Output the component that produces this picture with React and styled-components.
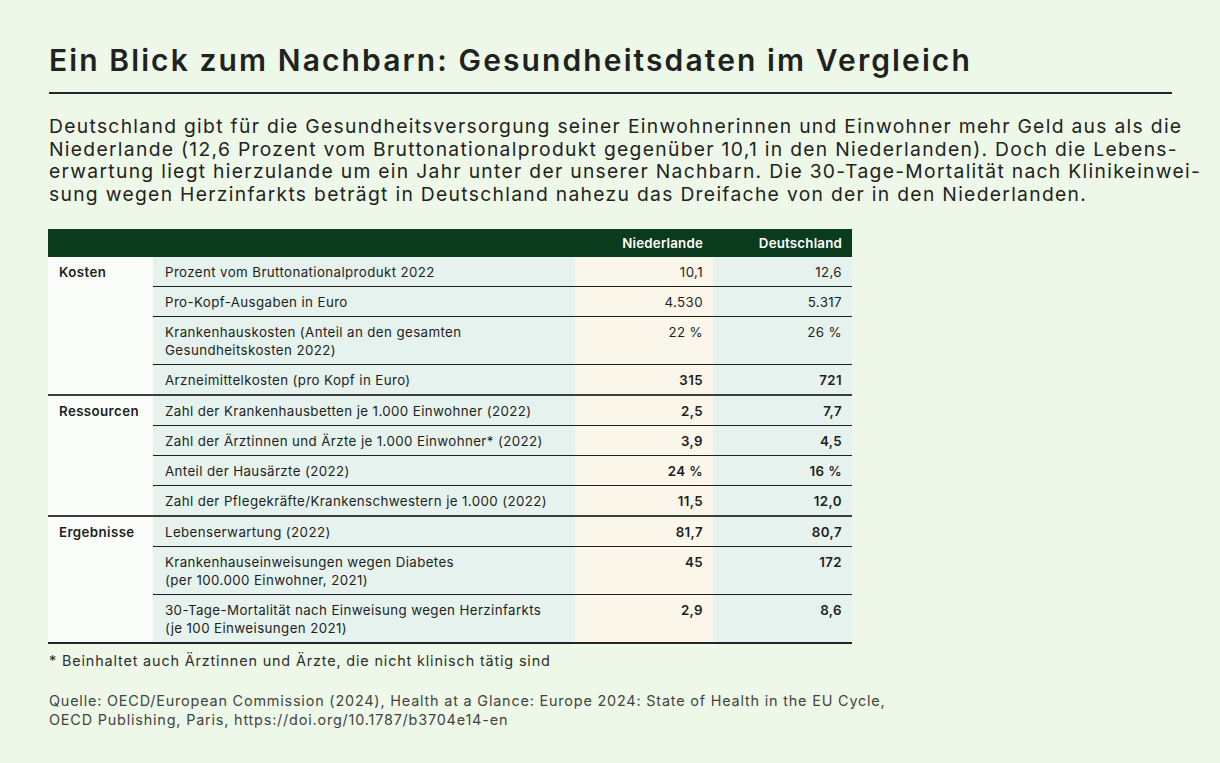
import React from 'react';
import styled, { createGlobalStyle } from 'styled-components';

const GlobalStyle = createGlobalStyle`
  html, body {
    margin: 0;
    padding: 0;
    background: #eef8e9;
  }
  body {
    font-family: Inter, "Noto Sans", "Liberation Sans", sans-serif;
    color: #1d1f1c;
  }
`;

const Page = styled.div`
  width: 1220px;
  height: 763px;
  box-sizing: border-box;
  padding: 40px 48px 0 49px;
  background: #eef8e9;
`;

const Title = styled.h1`
  margin: 0;
  font-size: 30px;
  line-height: 40px;
  font-weight: 600;
  letter-spacing: 2.1px;
  color: #1f2320;
  padding-bottom: 12px;
  border-bottom: 2px solid #23262a;
  width: 1123px;
  white-space: nowrap;
`;

const Intro = styled.p`
  margin: 21px 0 0;
  font-size: 19.3px;
  line-height: 22.7px;
  letter-spacing: 1.3px;
  color: #1f2320;

  span {
    display: block;
    white-space: nowrap;
  }
`;

const Table = styled.table`
  margin-top: 23px;
  width: 804px;
  border-collapse: collapse;
  table-layout: fixed;
  font-size: 13.3px;
  line-height: 18px;
  letter-spacing: 0.4px;
  border-bottom: 2px solid #23262a;
  margin-left: -1px;
`;

const HeadCell = styled.th`
  background: #0b3b1d;
  color: #ffffff;
  font-weight: 600;
  letter-spacing: 0.2px;
  text-align: right;
  height: 28px;
  padding: 0 10px;
  box-sizing: border-box;
`;

const Row = styled.tr`
  & > td {
    border-top: ${({ $groupStart, $first }) =>
      $first ? 'none' : $groupStart ? '2px solid #3a3d3b' : '1px solid #1d1f1c'};
  }
`;

const CategoryCell = styled.td`
  background: #fbfdfa;
  font-weight: 600;
  vertical-align: top;
  padding: 6px 11px 5px;
`;

const LabelCell = styled.td`
  background: #e6f2ee;
  vertical-align: top;
  padding: 6px 12px 5px;
`;

const ValueCell = styled.td`
  background: ${({ $tone }) => ($tone === 'cream' ? '#faf6ea' : '#e6f2ee')};
  text-align: right;
  vertical-align: top;
  padding: 6px 10px 5px;
  font-weight: ${({ $bold }) => ($bold ? 600 : 400)};
`;

const Footnote = styled.p`
  margin: 7px 0 0;
  font-size: 14.4px;
  line-height: 19px;
  letter-spacing: 0.85px;
  color: #2b2e2b;
`;

const Source = styled.p`
  margin: 21px 0 0;
  font-size: 14.4px;
  line-height: 19.5px;
  letter-spacing: 0.82px;
  color: #3f4440;
`;

const groups = [
  {
    name: 'Kosten',
    rows: [
      { label: ['Prozent vom Bruttonationalprodukt 2022'], nl: '10,1', de: '12,6' },
      { label: ['Pro-Kopf-Ausgaben in Euro'], nl: '4.530', de: '5.317' },
      {
        label: ['Krankenhauskosten (Anteil an den gesamten', 'Gesundheitskosten 2022)'],
        nl: '22 %',
        de: '26 %',
      },
      { label: ['Arzneimittelkosten (pro Kopf in Euro)'], nl: '315', de: '721', bold: true },
    ],
  },
  {
    name: 'Ressourcen',
    rows: [
      { label: ['Zahl der Krankenhausbetten je 1.000 Einwohner (2022)'], nl: '2,5', de: '7,7', bold: true },
      { label: ['Zahl der Ärztinnen und Ärzte je 1.000 Einwohner* (2022)'], nl: '3,9', de: '4,5', bold: true },
      { label: ['Anteil der Hausärzte (2022)'], nl: '24 %', de: '16 %', bold: true },
      { label: ['Zahl der Pflegekräfte/Krankenschwestern je 1.000 (2022)'], nl: '11,5', de: '12,0', bold: true },
    ],
  },
  {
    name: 'Ergebnisse',
    rows: [
      { label: ['Lebenserwartung (2022)'], nl: '81,7', de: '80,7', bold: true },
      {
        label: ['Krankenhauseinweisungen wegen Diabetes', '(per 100.000 Einwohner, 2021)'],
        nl: '45',
        de: '172',
        bold: true,
      },
      {
        label: ['30-Tage-Mortalität nach Einweisung wegen Herzinfarkts', '(je 100 Einweisungen 2021)'],
        nl: '2,9',
        de: '8,6',
        bold: true,
      },
    ],
  },
];

const introLines = [
  'Deutschland gibt für die Gesundheitsversorgung seiner Einwohnerinnen und Einwohner mehr Geld aus als die',
  'Niederlande (12,6 Prozent vom Bruttonationalprodukt gegenüber 10,1 in den Niederlanden). Doch die Lebens-',
  'erwartung liegt hierzulande um ein Jahr unter der unserer Nachbarn. Die 30-Tage-Mortalität nach Klinikeinwei-',
  'sung wegen Herzinfarkts beträgt in Deutschland nahezu das Dreifache von der in den Niederlanden.',
];

const App = () => {
  return (
    <Page>
      <GlobalStyle />
      <Title>Ein Blick zum Nachbarn: Gesundheitsdaten im Vergleich</Title>
      <Intro>
        {introLines.map((line) => (
          <span key={line}>{line}</span>
        ))}
      </Intro>

      <Table>
        <colgroup>
          <col style={{ width: 105 }} />
          <col style={{ width: 422 }} />
          <col style={{ width: 138 }} />
          <col style={{ width: 139 }} />
        </colgroup>
        <thead>
          <tr>
            <HeadCell />
            <HeadCell />
            <HeadCell>Niederlande</HeadCell>
            <HeadCell>Deutschland</HeadCell>
          </tr>
        </thead>
        <tbody>
          {groups.map((group, gi) =>
            group.rows.map((row, ri) => (
              <Row key={group.name + ri} $groupStart={ri === 0} $first={gi === 0 && ri === 0}>
                {ri === 0 && <CategoryCell rowSpan={group.rows.length}>{group.name}</CategoryCell>}
                <LabelCell>
                  {row.label.map((l, i) => (
                    <React.Fragment key={l}>
                      {i > 0 && <br />}
                      {l}
                    </React.Fragment>
                  ))}
                </LabelCell>
                <ValueCell $tone="cream" $bold={row.bold}>{row.nl}</ValueCell>
                <ValueCell $bold={row.bold}>{row.de}</ValueCell>
              </Row>
            ))
          )}
        </tbody>
      </Table>

      <Footnote>* Beinhaltet auch Ärztinnen und Ärzte, die nicht klinisch tätig sind</Footnote>
      <Source>
        Quelle: OECD/European Commission (2024), Health at a Glance: Europe 2024: State of Health in the EU Cycle,
        <br />
        OECD Publishing, Paris, https://doi.org/10.1787/b3704e14-en
      </Source>
    </Page>
  );
};

export default App;
